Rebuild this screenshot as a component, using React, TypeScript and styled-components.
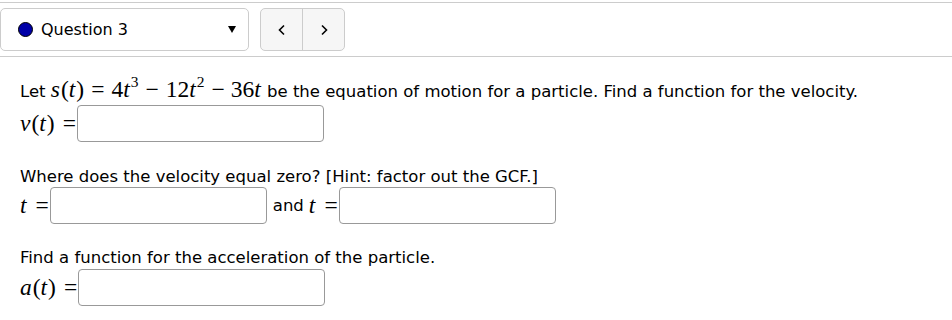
import React from "react";
import styled, { createGlobalStyle } from "styled-components";

const Global = createGlobalStyle`
  html, body { margin: 0; padding: 0; background: #fff; }
  body { font-family: "DejaVu Sans", sans-serif; color: #000; }
`;

const Header = styled.div`
  margin-top: 2px;
  border-top: 1px solid #ccc;
  border-bottom: 1px solid #ccc;
  padding: 5px 0;
  display: flex;
  align-items: stretch;
  gap: 11px;
`;

const Select = styled.div`
  box-sizing: border-box;
  width: 249px;
  height: 43px;
  border: 1px solid #ccc;
  border-radius: 5px;
  display: flex;
  align-items: center;
  padding: 0 12px 0 17px;
  font-size: 16px;
`;

const Dot = styled.span`
  box-sizing: border-box;
  width: 15px;
  height: 15px;
  border-radius: 50%;
  background: #0000a8;
  border: 1.5px solid #000;
  margin-right: 8px;
`;

const SelectLabel = styled.span`
  flex: 1;
`;

const Caret = styled.span`
  width: 0;
  height: 0;
  border-left: 4.5px solid transparent;
  border-right: 4.5px solid transparent;
  border-top: 7px solid #000;
`;

const NavGroup = styled.div`
  display: flex;
  box-sizing: border-box;
  height: 43px;
  border: 1px solid #ccc;
  border-radius: 5px;
  background: #f6f6f6;
  overflow: hidden;
`;

const NavButton = styled.div<{ $divider?: boolean }>`
  width: 41px;
  display: flex;
  align-items: center;
  justify-content: center;
  border-right: ${(p) => (p.$divider ? "1px solid #ccc" : "none")};
`;

const Body = styled.div`
  padding: 23px 20px 0 20px;
  font-size: 16.5px;
`;

const Math = styled.span`
  font-family: "Liberation Serif", "DejaVu Serif", serif;
  font-size: 23.5px;
  line-height: 1;
`;

const Para = styled.div<{ $top?: number }>`
  margin-top: ${(p) => p.$top ?? 0}px;
  line-height: 24px;
  height: 24px;
  white-space: nowrap;
  ${Math} {
    line-height: 0;
  }
`;

const Row = styled.div<{ $top?: number }>`
  display: flex;
  align-items: center;
  height: 37px;
  margin-top: ${(p) => p.$top ?? 0}px;
  white-space: nowrap;
`;

const V = styled.i`
  font-style: italic;
  padding-right: 1px;
`;

const Op = styled.span<{ $l?: number; $r?: number }>`
  padding-left: ${(p) => p.$l ?? 5}px;
  padding-right: ${(p) => p.$r ?? 5}px;
`;

const Sup = styled.sup`
  font-size: 15.5px;
  vertical-align: 10px;
  line-height: 0;
`;

const Input = styled.input<{ $w: number }>`
  box-sizing: border-box;
  width: ${(p) => p.$w}px;
  height: 37px;
  border: 1px solid #999;
  border-radius: 4px;
  margin: 0 0 0 1px;
  padding: 0 6px;
  font-size: 16px;
  background: #fff;
`;

const Text = styled.span`
  margin: 0 5px 0 6px;
`;

const Chevron = ({ dir }: { dir: "l" | "r" }) => (
  <svg width="10" height="12" viewBox="0 0 10 12">
    <path
      d={dir === "l" ? "M7 1.5 L2.5 6 L7 10.5" : "M3 1.5 L7.5 6 L3 10.5"}
      fill="none"
      stroke="#000"
      strokeWidth="1.6"
    />
  </svg>
);

export default function App() {
  return (
    <>
      <Global />
      <Header>
        <Select>
          <Dot />
          <SelectLabel>Question 3</SelectLabel>
          <Caret />
        </Select>
        <NavGroup>
          <NavButton $divider>
            <Chevron dir="l" />
          </NavButton>
          <NavButton>
            <Chevron dir="r" />
          </NavButton>
        </NavGroup>
      </Header>
      <Body>
        <Para>
          Let{" "}
          <Math>
            <V>s</V>(<V>t</V>)<Op $l={7} $r={7}>=</Op>4<V>t</V>
            <Sup>3</Sup>
            <Op $l={7} $r={7}>−</Op>12<V>t</V>
            <Sup>2</Sup>
            <Op $l={7} $r={6}>−</Op>36<V>t</V>
          </Math>{" "}
          be the equation of motion for a particle. Find a function for the velocity.
        </Para>
        <Row $top={1}>
          <Math>
            <V>v</V>(<V>t</V>)<Op $l={8} $r={0}>=</Op>
          </Math>
          <Input $w={247} />
        </Row>
        <Para $top={23}>Where does the velocity equal zero? [Hint: factor out the GCF.]</Para>
        <Row $top={-2}>
          <Math>
            <V>t</V>
            <Op $l={8} $r={0}>=</Op>
          </Math>
          <Input $w={217} />
          <Text>and</Text>
          <Math>
            <V>t</V>
            <Op $l={8} $r={0}>=</Op>
          </Math>
          <Input $w={217} />
        </Row>
        <Para $top={22}>Find a function for the acceleration of the particle.</Para>
        <Row $top={-1}>
          <Math>
            <V>a</V>(<V>t</V>)<Op $l={8} $r={0}>=</Op>
          </Math>
          <Input $w={247} />
        </Row>
      </Body>
    </>
  );
}
